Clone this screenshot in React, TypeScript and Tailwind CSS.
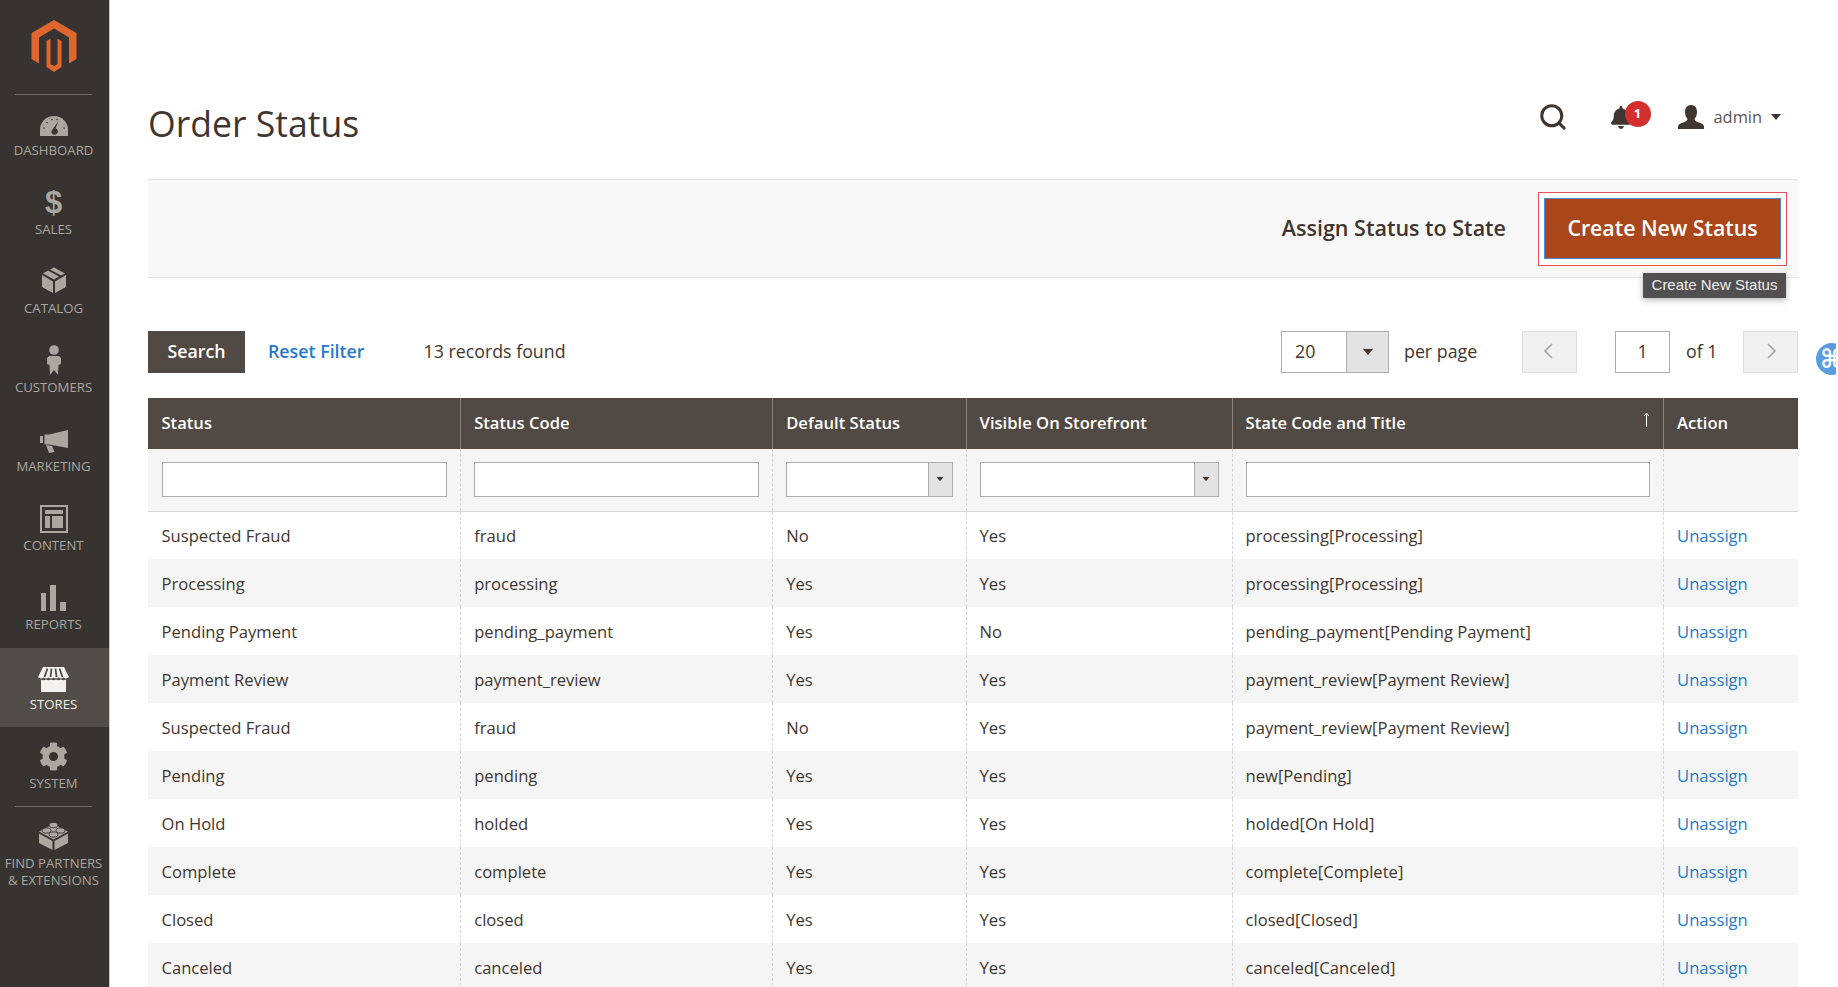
import { ReactNode } from 'react';
import { Search } from 'lucide-react';
import { FaBell, FaCog } from 'react-icons/fa';

const rows = [
  ['Suspected Fraud', 'fraud', 'No', 'Yes', 'processing[Processing]'],
  ['Processing', 'processing', 'Yes', 'Yes', 'processing[Processing]'],
  ['Pending Payment', 'pending_payment', 'Yes', 'No', 'pending_payment[Pending Payment]'],
  ['Payment Review', 'payment_review', 'Yes', 'Yes', 'payment_review[Payment Review]'],
  ['Suspected Fraud', 'fraud', 'No', 'Yes', 'payment_review[Payment Review]'],
  ['Pending', 'pending', 'Yes', 'Yes', 'new[Pending]'],
  ['On Hold', 'holded', 'Yes', 'Yes', 'holded[On Hold]'],
  ['Complete', 'complete', 'Yes', 'Yes', 'complete[Complete]'],
  ['Closed', 'closed', 'Yes', 'Yes', 'closed[Closed]'],
  ['Canceled', 'canceled', 'Yes', 'Yes', 'canceled[Canceled]'],
];

function Logo() {
  return (
    <svg width="46" height="52" viewBox="0 0 46 52" fill="#e0662f">
      <polygon points="23,0 45.5,13 45.5,39 38,43.5 38,17.5 23,8.5 8,17.5 8,43.5 0.5,39 0.5,13" />
      <polygon points="15.5,21 19.5,18.7 19.5,44 23,46 26.5,44 26.5,18.7 30.5,21 30.5,47 23,52 15.5,47" />
    </svg>
  );
}

const c = '#aaa6a0';

function DashboardIcon() {
  return (
    <svg width="28" height="20" viewBox="0 0 28 20">
      <path d="M0 20 V14 A14 14 0 0 1 28 14 V20 Z" fill={c} />
      <path d="M18.5 5 L15.5 12.5 A3.2 3.2 0 1 1 11.5 15 Z" fill="#373330" />
      <g fill="#373330">
        <circle cx="4" cy="12" r="0.8" />
        <circle cx="7" cy="6.5" r="0.8" />
        <circle cx="12" cy="3.5" r="0.8" />
        <circle cx="17" cy="3.5" r="0.8" />
        <circle cx="24" cy="12" r="0.8" />
      </g>
    </svg>
  );
}

function CatalogIcon() {
  return (
    <svg width="24" height="26" viewBox="0 0 24 26" fill={c}>
      <polygon points="0,8 11,14.5 11,26 0,20" />
      <polygon points="13,14.5 24,8 24,20 13,26" />
      <polygon points="1,6.5 6,3.5 17,9.5 12,12.5" />
      <polygon points="8,2.5 12,0.5 23,6.5 19,8.5" />
    </svg>
  );
}

function CustomersIcon() {
  return (
    <svg width="14" height="30" viewBox="0 0 14 30" fill={c}>
      <circle cx="7" cy="5" r="4.8" />
      <path d="M2 11 H12 L14 13 V19 L11.5 20 L11 30 L7 25 L3 30 L2.5 20 L0 19 V13 Z" />
    </svg>
  );
}

function MarketingIcon() {
  return (
    <svg width="28" height="23" viewBox="0 0 28 23" fill={c}>
      <rect x="0" y="6" width="3" height="7" />
      <path d="M4.5 4.5 H9 L28 0 V18 L9 14.5 H4.5 Z" />
      <path d="M6 15 L12 16 L14.5 22 L9 23 Z" />
    </svg>
  );
}

function ContentIcon() {
  return (
    <svg width="28" height="28" viewBox="0 0 28 28" fill={c}>
      <path d="M0 0 H28 V28 H0 Z M2 2 V26 H26 V2 Z" fillRule="evenodd" />
      <rect x="5" y="5" width="18" height="4" />
      <rect x="5" y="11" width="5" height="12" />
      <rect x="12" y="11" width="11" height="12" />
    </svg>
  );
}

function ReportsIcon() {
  return (
    <svg width="25" height="26" viewBox="0 0 25 26" fill={c}>
      <rect x="0" y="8" width="5" height="18" />
      <rect x="9" y="0" width="6" height="26" />
      <rect x="19" y="17" width="6" height="9" />
    </svg>
  );
}

function StoresIcon() {
  return (
    <svg width="31" height="25" viewBox="0 0 31 25" fill="#f3f1ee">
      <path d="M5 0 H26 L31 10 Q28 12.5 25.5 10.5 Q23 12.5 20.5 10.5 Q18 12.5 15.5 10.5 Q13 12.5 10.5 10.5 Q8 12.5 5.5 10.5 Q3 12.5 0 10 Z" />
      <path d="M3 12.5 Q5.5 14 8 12.5 Q10.5 14 13 12.5 Q15.5 14 18 12.5 Q20.5 14 23 12.5 Q25.5 14 28 12.5 V25 H3 Z" />
      <g stroke="#524d49" strokeWidth="1.8">
        <line x1="9.5" y1="1.5" x2="6.5" y2="10" />
        <line x1="13.5" y1="1.5" x2="12.5" y2="10" />
        <line x1="17.5" y1="1.5" x2="18.5" y2="10" />
        <line x1="21.5" y1="1.5" x2="24.5" y2="10" />
      </g>
    </svg>
  );
}

function PartnersIcon() {
  return (
    <svg width="29" height="29" viewBox="0 0 29 29" fill={c}>
      <polygon points="14.5,3 29,10.5 14.5,18.5 0,10.5" />
      <polygon points="0,12.5 13.5,20 13.5,29 0,22" />
      <polygon points="15.5,20 29,12.5 29,22 15.5,29" />
      <g stroke="#373330" strokeWidth="0.9">
        <ellipse cx="14.5" cy="4" rx="4.5" ry="2.6" />
        <ellipse cx="7.5" cy="9.5" rx="4.5" ry="2.6" />
        <ellipse cx="21.5" cy="9.5" rx="4.5" ry="2.6" />
        <ellipse cx="14.5" cy="13.5" rx="4.5" ry="2.6" />
      </g>
    </svg>
  );
}

function UserIcon() {
  return (
    <svg width="26" height="24" viewBox="0 0 26 24" fill="#41362f">
      <path d="M13 0 C17 0 19 3 19 7 C19 10 18 12 16.5 14 C16.5 15 17.5 16 19.5 17 C22.5 18 26 19 26 22 V24 H0 V22 C0 19 3.5 18 6.5 17 C8.5 16 9.5 15 9.5 14 C8 12 7 10 7 7 C7 3 9 0 13 0 Z" />
    </svg>
  );
}

function Caret({ className }: { className: string }) {
  return (
    <svg width="10" height="6" viewBox="0 0 10 6" className={className}>
      <polygon points="0,0 10,0 5,6" fill="currentColor" />
    </svg>
  );
}

interface NavItemProps {
  icon: ReactNode;
  label: ReactNode;
  active?: boolean;
  iconClass?: string;
  labelClass?: string;
}

function NavItem({ icon, label, active, iconClass = '', labelClass = 'mt-[3px]' }: NavItemProps) {
  return (
    <div
      className={`h-[79px] pt-[14px] pr-[2px] flex flex-col items-center text-center text-[13.2px] leading-[17px] ${
        active ? 'bg-[#524d49] text-[#f3f1ee]' : 'text-[#aaa6a0]'
      }`}
    >
      <div className={`h-[30px] flex items-center justify-center ${iconClass}`}>{icon}</div>
      <div className={`whitespace-nowrap ${labelClass}`}>{label}</div>
    </div>
  );
}

function Sidebar() {
  return (
    <aside className="w-[110px] shrink-0 h-full bg-[#373330] border-r border-[#c9c9c9] flex flex-col">
      <div className="h-[95px] pt-[20px] pr-[2px] flex flex-col items-center">
        <Logo />
        <div className="mt-[22px] w-[77px] h-px bg-[#6f6a65]" />
      </div>
      <NavItem icon={<DashboardIcon />} label="DASHBOARD" iconClass="pt-[4px]" />
      <NavItem
        icon={<span className="font-['Liberation_Sans',sans-serif] font-bold text-[31px] leading-none">$</span>}
        label="SALES"
        iconClass="pb-[2px]"
      />
      <NavItem icon={<CatalogIcon />} label="CATALOG" iconClass="pb-[4px]" />
      <NavItem icon={<CustomersIcon />} label="CUSTOMERS" iconClass="pb-[3px]" />
      <NavItem icon={<MarketingIcon />} label="MARKETING" iconClass="pt-[2px]" />
      <NavItem icon={<ContentIcon />} label="CONTENT" />
      <NavItem icon={<ReportsIcon />} label="REPORTS" />
      <NavItem icon={<StoresIcon />} label="STORES" active iconClass="pt-[4px]" labelClass="mt-[4px]" />
      <NavItem icon={<FaCog size={29} />} label="SYSTEM" labelClass="mt-[4px]" />
      <div className="ml-[15px] w-[77px] h-px bg-[#6f6a65]" />
      <NavItem
        icon={<PartnersIcon />}
        label={
          <>
            FIND PARTNERS
            <br />& EXTENSIONS
          </>
        }
        iconClass="pb-[2px]"
        labelClass="mt-[4px]"
      />
    </aside>
  );
}

function TopBar() {
  return (
    <header className="h-[179px] flex items-start justify-between">
      <h1 className="mt-[98px] text-[35.6px] leading-[51px] font-normal text-[#41362f]">Order Status</h1>
      <div className="mt-[102px] h-[30px] flex items-center text-[#41362f]">
        <Search size={30} strokeWidth={2.4} />
        <div className="relative ml-[42.5px] w-[20px] h-[24px] flex items-center">
          <FaBell size={23} />
          <span className="absolute -top-[4px] left-[14px] w-[26px] h-[26px] rounded-full bg-[#d32f2f] text-white text-[13px] font-bold flex items-center justify-center">
            1
          </span>
        </div>
        <div className="ml-[47.5px]">
          <UserIcon />
        </div>
        <span className="ml-[9.5px] text-[#5b5450] text-[16.4px]">admin</span>
        <Caret className="ml-[9px] mr-[17px] text-[#41362f]" />
      </div>
    </header>
  );
}

function ActionBand() {
  return (
    <div className="h-[99px] bg-[#f8f8f8] border-y border-[#e3e3e3] flex items-center justify-end pr-[11px]">
      <span className="text-[21.5px] font-semibold text-[#41362f]">Assign Status to State</span>
      <div className="relative ml-[32px] w-[249px] h-[74px] border border-[#e2525c] bg-white flex items-center justify-center">
        <button className="w-[237px] h-[61px] pb-[2px] bg-[#a9471b] border border-[#4f86d6] text-white text-[21.3px] font-semibold">
          Create New Status
        </button>
        <div className="absolute right-0 top-[80px] w-[143px] h-[25px] bg-[#514f4f] shadow-[0_2px_6px_rgba(0,0,0,0.3)] rounded-[1px] text-[#eeeeee] text-[15px] font-['Liberation_Sans',sans-serif] flex items-center justify-center whitespace-nowrap z-10">
          Create New Status
        </div>
      </div>
    </div>
  );
}

function Toolbar() {
  return (
    <div className="mt-[53px] h-[42px] flex items-center text-[17.8px] text-[#41362f]">
      <button className="w-[97px] h-[42px] pb-[2px] bg-[#514943] text-white font-semibold">Search</button>
      <a className="ml-[23px] mb-[2px] text-[#2579cf] font-semibold">Reset Filter</a>
      <span className="ml-[59px] mb-[2px]">13 records found</span>
      <div className="ml-auto flex items-center">
        <div className="w-[108px] h-[42px] border border-[#adadad] flex">
          <div className="flex-1 pl-[13px] pb-[2px] flex items-center bg-white">20</div>
          <div className="w-[42px] bg-[#e3e3e3] border-l border-[#adadad] flex items-center justify-center">
            <Caret className="text-[#41362f]" />
          </div>
        </div>
        <span className="ml-[15px] w-[118px] mb-[2px]">per page</span>
        <div className="w-[55px] h-[42px] pr-[4px] pb-[3px] bg-[#f0f0f0] border border-[#dcdcdc] flex items-center justify-center">
          <svg width="10" height="16" viewBox="0 0 10 16" fill="none" stroke="#a5a5a5" strokeWidth="1.6">
            <polyline points="9,1 2,8 9,15" />
          </svg>
        </div>
        <div className="ml-[38px] w-[55px] h-[42px] pb-[2px] border border-[#adadad] flex items-center justify-center">1</div>
        <span className="ml-[16px] w-[57px] mb-[2px]">of 1</span>
        <div className="w-[55px] h-[42px] pl-[2px] pb-[3px] bg-[#f0f0f0] border border-[#dcdcdc] flex items-center justify-center">
          <svg width="10" height="16" viewBox="0 0 10 16" fill="none" stroke="#a5a5a5" strokeWidth="1.6">
            <polyline points="1,1 8,8 1,15" />
          </svg>
        </div>
      </div>
    </div>
  );
}

function FilterInput() {
  return <input className="block w-full h-[35px] bg-white border border-[#adadad] outline-none" />;
}

function FilterSelect() {
  return (
    <div className="w-full h-[35px] border border-[#adadad] flex bg-white">
      <div className="flex-1" />
      <div className="w-[24px] bg-[#e3e3e3] border-l border-[#adadad] flex items-center justify-center">
        <Caret className="text-[#41362f] scale-75" />
      </div>
    </div>
  );
}

const th = 'px-[13px] first:pl-[13.5px] text-left font-semibold border-r border-[#8a837f] last:border-r-0';
const tdf = 'px-[13px] first:pl-[13.5px] border-r border-dashed border-[#d6d6d6] last:border-r-0';

function StatusTable() {
  return (
    <table className="mt-[25px] w-full table-fixed border-collapse text-[16.6px] text-[#41362f]">
      <colgroup>
        <col className="w-[312.7px]" />
        <col className="w-[312px]" />
        <col className="w-[193.4px]" />
        <col className="w-[266px]" />
        <col className="w-[431.5px]" />
        <col className="w-[134.4px]" />
      </colgroup>
      <thead>
        <tr className="h-[51px] bg-[#514943] text-white">
          <th className={th}>Status</th>
          <th className={th}>Status Code</th>
          <th className={th}>Default Status</th>
          <th className={th}>Visible On Storefront</th>
          <th className={`${th} relative`}>
            State Code and Title
            <svg
              className="absolute right-[13px] top-[14px]"
              width="7"
              height="15"
              viewBox="0 0 7 15"
              fill="none"
              stroke="#ffffff"
              strokeWidth="1"
            >
              <path d="M3.5 15 V1 M1 4 L3.5 1 L6 4" />
            </svg>
          </th>
          <th className={th}>Action</th>
        </tr>
        <tr className="h-[62px] bg-[#f5f5f5] border-b border-[#d6d6d6]">
          <td className={`${tdf} pb-[1px]`}><FilterInput /></td>
          <td className={`${tdf} pb-[1px]`}><FilterInput /></td>
          <td className={`${tdf} pb-[1px]`}><FilterSelect /></td>
          <td className={`${tdf} pb-[1px]`}><FilterSelect /></td>
          <td className={`${tdf} pb-[1px]`}><FilterInput /></td>
          <td className={tdf} />
        </tr>
      </thead>
      <tbody>
        {rows.map((row, i) => (
          <tr key={i} className={`h-[48px] ${i % 2 === 1 ? 'bg-[#f5f5f5]' : 'bg-white'}`}>
            {row.map((v, j) => (
              <td key={j} className={`${tdf} pt-[3px]`}>{v}</td>
            ))}
            <td className={`${tdf} pt-[3px]`}>
              <a className="text-[#2579cf]">Unassign</a>
            </td>
          </tr>
        ))}
      </tbody>
    </table>
  );
}

export default function App() {
  return (
    <div className="relative h-screen w-full overflow-hidden flex bg-white font-['Open_Sans',sans-serif]">
      <Sidebar />
      <main className="flex-1 min-w-0 pl-[38px] pr-[40px]">
        <TopBar />
        <ActionBand />
        <Toolbar />
        <StatusTable />
      </main>
      <div className="absolute top-[343px] right-[2px] w-[20px] h-[32px] overflow-hidden">
        <div className="w-[32px] h-[32px] rounded-full bg-[#5b9bdf] text-white text-[26px] font-bold font-['DejaVu_Sans',sans-serif] flex items-center justify-center">
          ⌘
        </div>
      </div>
    </div>
  );
}
